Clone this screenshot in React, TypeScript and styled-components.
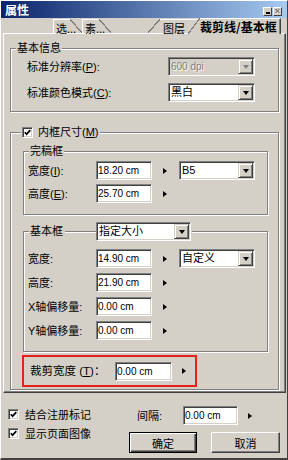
import React from 'react';
import styled, { createGlobalStyle, css } from 'styled-components';

const FACE = '#d4d0c8';
const SHADOW = '#808080';
const DARK = '#404040';
const LIGHT = '#ffffff';
const SL = 12;

const GlobalStyle = createGlobalStyle`
  html, body { margin: 0; padding: 0; background: ${FACE}; }
  body {
    font-family: "Liberation Sans", "Noto Sans CJK SC", sans-serif;
    font-size: 11px;
    color: #000;
  }
  * { box-sizing: border-box; }
`;

const Window = styled.div`
  width: 288px;
  height: 460px;
  background: ${FACE};
  border-style: solid;
  border-width: 1px 1px 2px 1px;
  border-color: ${LIGHT} ${DARK} ${DARK} ${LIGHT};
  display: flex;
  flex-direction: column;
  overflow: hidden;
`;

const TitleBar = styled.div`
  flex: none;
  height: 17px;
  background: linear-gradient(to right, #0a246a, #a6caf0);
  display: flex;
  align-items: center;
  padding: 0 5px 0 4px;
`;

const Title = styled.span`
  flex: 1;
  color: #fff;
  font-family: "Noto Sans CJK SC", sans-serif;
  font-weight: bold;
  font-size: 12px;
  line-height: 14px;
`;

const CaptionButtons = styled.div`
  display: flex;
  gap: 1px;
  margin-top: 3px;
`;

const CaptionButton = styled.div`
  width: 9px;
  height: 9px;
  background: ${FACE};
  border: 1px solid;
  border-color: ${LIGHT} ${DARK} ${DARK} ${LIGHT};
  display: flex;
  align-items: flex-end;
  justify-content: center;
  padding-bottom: 1px;
`;

const MinBar = styled.span`
  width: 4px;
  height: 2px;
  background: #000;
`;

const TabStrip = styled.div`
  flex: none;
  height: 15px;
  margin: 0 1px 0 2px;
  padding: 0 5px 0 50px;
  display: flex;
  align-items: flex-end;
  position: relative;
  z-index: 1;
`;

type Edge = 'v' | 's' | 'n';

const slantLeft = (inside: string, bottom: number) => css`
  &::before {
    content: '';
    position: absolute;
    left: -${SL}px;
    top: -1px;
    bottom: ${bottom}px;
    width: ${SL}px;
    background: linear-gradient(
      to top left,
      ${inside} calc(50% - 0.6px),
      ${SHADOW} calc(50% - 0.6px),
      ${SHADOW} calc(50% + 0.6px),
      transparent calc(50% + 0.6px)
    );
  }
`;

const slantRight = css`
  &::after {
    content: '';
    position: absolute;
    right: -${SL}px;
    top: -1px;
    bottom: 0;
    width: ${SL}px;
    background: linear-gradient(
      to top right,
      transparent calc(50% - 0.6px),
      ${SHADOW} calc(50% - 0.6px),
      ${SHADOW} calc(50% + 0.6px),
      transparent calc(50% + 0.6px)
    );
  }
`;

const Tab = styled.div<{ $left: Edge; $right: Edge; $w: number; $active?: boolean; $tuck?: boolean }>`
  position: relative;
  flex: none;
  width: ${p => p.$w}px;
  height: ${p => (p.$active ? 16 : 14)}px;
  margin-bottom: ${p => (p.$active ? -1 : 0)}px;
  margin-left: ${p => (p.$left === 's' ? SL : 0)}px;
  margin-right: ${p => (p.$right === 's' ? SL : p.$tuck ? -SL : 0)}px;
  z-index: ${p => (p.$active ? 2 : 1)};
  background: ${p => (p.$active ? FACE : 'transparent')};
  border-top: 1px solid ${LIGHT};
  border-left: ${p => (p.$left === 'v' ? `1px solid ${LIGHT}` : '0')};
  border-right: ${p => (p.$right === 'v' ? `1px solid ${DARK}` : '0')};
  box-shadow: ${p => (p.$right === 'v' ? `inset -1px 0 0 ${SHADOW}` : 'none')};
  padding-left: ${p => (p.$left === 'v' ? 2 : 3)}px;
  padding-top: 1px;
  white-space: nowrap;
  ${p => p.$left === 's' && slantLeft(p.$active ? FACE : 'transparent', 0)}
  ${p => p.$right === 's' && slantRight}
`;

const TabLabel = styled.span<{ $active?: boolean }>`
  position: relative;
  z-index: 1;
  display: block;
  margin-left: ${p => (p.$active ? -3 : 0)}px;
  font-family: "Noto Sans CJK SC", sans-serif;
  font-size: ${p => (p.$active ? 12 : 11)}px;
  font-weight: ${p => (p.$active ? 'bold' : 'normal')};
  line-height: 14px;
`;

const TabGap = styled.div`
  flex: 1;
`;

const Panel = styled.div`
  flex: none;
  margin: 0 1px 0 2px;
  border: 1px solid;
  border-color: ${LIGHT} ${DARK} ${DARK} ${LIGHT};
  box-shadow: inset -1px -1px 0 ${SHADOW};
  padding: 7px 6px 2px 6px;
`;

const Group = styled.fieldset<{ $pad: string; $mt?: number }>`
  margin: ${p => p.$mt ?? 0}px 0 0 0;
  padding: ${p => p.$pad};
  min-width: 0;
  border: 1px solid ${SHADOW};
  box-shadow: 1px 1px 0 ${LIGHT}, inset 1px 1px 0 ${LIGHT};
`;

const Legend = styled.legend<{ $ml: number }>`
  margin-left: ${p => p.$ml}px;
  padding: 0 1px;
  background: ${FACE};
`;

const LegendRow = styled.span`
  display: flex;
  align-items: center;
  line-height: 15px;
  white-space: nowrap;
`;

const LegendLine = styled.span<{ $w: number }>`
  width: ${p => p.$w}px;
  height: 19px;
  background: linear-gradient(
    to bottom,
    transparent 9px,
    ${SHADOW} 9px,
    ${SHADOW} 10px,
    ${LIGHT} 10px,
    ${LIGHT} 11px,
    transparent 11px
  );
`;

const Rows = styled.div<{ $cols: string; $gap: number }>`
  display: grid;
  grid-template-columns: ${p => p.$cols};
  row-gap: ${p => p.$gap}px;
  align-items: center;
`;

const Label = styled.span`
  line-height: 14px;
  white-space: nowrap;
`;

const Field = styled.input<{ $w: number }>`
  width: ${p => p.$w}px;
  height: 19px;
  margin: 0;
  padding: 0 0 0 1px;
  background: #fff;
  border: 1px solid;
  border-color: ${SHADOW} ${LIGHT} ${LIGHT} ${SHADOW};
  box-shadow: inset 1px 1px 0 ${DARK}, inset -1px -1px 0 ${FACE};
  font-family: "Liberation Sans", sans-serif;
  font-size: 10px;
  color: #000;
  outline: none;
`;

const Select = styled.div<{ $w: number; $disabled?: boolean }>`
  width: ${p => p.$w}px;
  height: 19px;
  display: flex;
  align-items: center;
  background: ${p => (p.$disabled ? FACE : '#fff')};
  border: 1px solid;
  border-color: ${SHADOW} ${LIGHT} ${LIGHT} ${SHADOW};
  box-shadow: inset 1px 1px 0 ${DARK}, inset -1px -1px 0 ${FACE};
  padding: 1px 1px 1px 2px;
`;

const SelectText = styled.span<{ $disabled?: boolean }>`
  flex: 1;
  font-size: ${p => (p.$disabled ? 10 : 11)}px;
  line-height: 15px;
  color: ${p => (p.$disabled ? SHADOW : '#000')};
  text-shadow: ${p => (p.$disabled ? `1px 1px 0 ${LIGHT}` : 'none')};
  white-space: nowrap;
  overflow: hidden;
`;

const DropButton = styled.span<{ $disabled?: boolean }>`
  flex: none;
  width: 15px;
  height: 15px;
  background: ${FACE};
  border: 1px solid;
  border-color: ${FACE} ${DARK} ${DARK} ${FACE};
  box-shadow: inset 1px 1px 0 ${LIGHT}, inset -1px -1px 0 ${SHADOW};
  display: flex;
  align-items: center;
  justify-content: center;
  &::before {
    content: '';
    width: 0;
    height: 0;
    border-top: 4px solid ${p => (p.$disabled ? SHADOW : '#000')};
    border-left: 3.5px solid transparent;
    border-right: 3.5px solid transparent;
    margin-top: 1px;
  }
`;

const Arrow = styled.span<{ $ml?: number }>`
  justify-self: start;
  width: 0;
  height: 0;
  margin-left: ${p => p.$ml ?? 11}px;
  border-left: 4px solid #000;
  border-top: 3.5px solid transparent;
  border-bottom: 3.5px solid transparent;
`;

const CheckBox = styled.span`
  flex: none;
  width: 11px;
  height: 11px;
  background: #fff;
  border: 1px solid;
  border-color: ${SHADOW} ${LIGHT} ${LIGHT} ${SHADOW};
  box-shadow: inset 1px 1px 0 ${DARK}, inset -1px -1px 0 ${FACE};
  display: flex;
  align-items: center;
  justify-content: center;
`;

const CropBox = styled.div`
  margin: 3px 0 0 -1px;
  width: 175px;
  height: 32px;
  border: 2px solid #e8201c;
  display: flex;
  align-items: center;
  padding-left: 6px;
`;

const CropLabel = styled(Label)`
  width: 85px;
  font-size: 11.5px;
`;

const Footer = styled.div`
  flex: none;
  display: flex;
  align-items: flex-start;
  padding: 12px 0 0 7px;
`;

const CheckList = styled.div`
  width: 121px;
  display: flex;
  flex-direction: column;
`;

const CheckRow = styled.label`
  height: 19px;
  display: flex;
  align-items: center;
  gap: 6px;
  line-height: 14px;
  white-space: nowrap;
`;

const FooterRight = styled.div`
  padding-top: 1px;
  display: flex;
  flex-direction: column;
  gap: 7px;
`;

const SpacingRow = styled.div`
  height: 19px;
  display: flex;
  align-items: center;
`;

const SpacingLabel = styled(Label)`
  width: 46px;
  margin-left: 8px;
`;

const ButtonRow = styled.div`
  display: flex;
  gap: 14px;
`;

const Button = styled.button<{ $w: number; $default?: boolean }>`
  width: ${p => p.$w}px;
  height: 21px;
  margin: 0;
  padding: 0;
  background: ${FACE};
  font-family: "Liberation Sans", "Noto Sans CJK SC", sans-serif;
  font-size: 11px;
  color: #000;
  ${p =>
    p.$default
      ? css`
          border: 1px solid #000;
          box-shadow: inset 1px 1px 0 ${LIGHT}, inset -1px -1px 0 ${DARK}, inset -2px -2px 0 ${SHADOW};
        `
      : css`
          border: 1px solid;
          border-color: ${LIGHT} ${DARK} ${DARK} ${LIGHT};
          box-shadow: inset -1px -1px 0 ${SHADOW};
        `}
`;

const Check = () => (
  <svg width="7" height="7" viewBox="0 0 7 7">
    <polyline points="0.8,3.2 2.6,5.2 6.3,1.2" fill="none" stroke="#000" strokeWidth="1.7" />
  </svg>
);

const CloseGlyph = () => (
  <svg width="7" height="6" viewBox="0 0 7 6" style={{ marginBottom: 0 }}>
    <path d="M1.5 1 L5.5 5 M5.5 1 L1.5 5" stroke={LIGHT} strokeWidth="1.2" transform="translate(0.6 0.6)" />
    <path d="M1.5 1 L5.5 5 M5.5 1 L1.5 5" stroke={SHADOW} strokeWidth="1.2" />
  </svg>
);

const WIDE = '68px 56px 27px 76px';

export default function App() {
  return (
    <>
      <GlobalStyle />
      <Window>
        <TitleBar>
          <Title>属性</Title>
          <CaptionButtons>
            <CaptionButton>
              <MinBar />
            </CaptionButton>
            <CaptionButton>
              <CloseGlyph />
            </CaptionButton>
          </CaptionButtons>
        </TitleBar>

        <TabStrip>
          <Tab $left="v" $right="s" $w={17}>
            <TabLabel>选...</TabLabel>
          </Tab>
          <Tab $left="v" $right="s" $w={17}>
            <TabLabel>素...</TabLabel>
          </Tab>
          <TabGap />
          <Tab $left="s" $right="n" $w={40} $tuck>
            <TabLabel>图层</TabLabel>
          </Tab>
          <Tab $left="s" $right="v" $w={81} $active>
            <TabLabel $active>裁剪线/基本框</TabLabel>
          </Tab>
        </TabStrip>

        <Panel>
          <Group $pad="1px 0 9px 16px">
            <Legend $ml={-11}>
              <LegendRow>基本信息</LegendRow>
            </Legend>
            <Rows $cols="141px 87px" $gap={7}>
              <Label>
                标准分辨率(<u>P</u>):
              </Label>
              <Select $w={87} $disabled>
                <SelectText $disabled>600 dpi</SelectText>
                <DropButton $disabled />
              </Select>
              <Label>
                标准颜色模式(<u>C</u>):
              </Label>
              <Select $w={87}>
                <SelectText>黑白</SelectText>
                <DropButton />
              </Select>
            </Rows>
          </Group>

          <Group $pad="4px 10px 2px 12px" $mt={13}>
            <Legend $ml={-2}>
              <LegendRow>
                <CheckBox>
                  <Check />
                </CheckBox>
                <span style={{ marginLeft: 5 }}>
                  内框尺寸(<u>M</u>)
                </span>
              </LegendRow>
            </Legend>

            <Group $pad="2px 0 11px 4px">
              <Legend $ml={1}>
                <LegendRow>完稿框</LegendRow>
              </Legend>
              <Rows $cols={WIDE} $gap={4}>
                <Label>
                  宽度(<u>I</u>):
                </Label>
                <Field $w={56} readOnly value="18.20 cm" />
                <Arrow />
                <Select $w={76}>
                  <SelectText>B5</SelectText>
                  <DropButton />
                </Select>
                <Label>
                  高度(<u>E</u>):
                </Label>
                <Field $w={56} readOnly value="25.70 cm" />
                <Arrow />
                <span />
              </Rows>
            </Group>

            <Group $pad="8px 0 11px 4px" $mt={7}>
              <Legend $ml={1}>
                <LegendRow>
                  <span style={{ paddingRight: 2 }}>基本框</span>
                  <LegendLine $w={31} />
                  <Select $w={95}>
                    <SelectText>指定大小</SelectText>
                    <DropButton />
                  </Select>
                </LegendRow>
              </Legend>
              <Rows $cols={WIDE} $gap={5}>
                <Label>宽度:</Label>
                <Field $w={56} readOnly value="14.90 cm" />
                <Arrow />
                <Select $w={76}>
                  <SelectText>自定义</SelectText>
                  <DropButton />
                </Select>
                <Label>高度:</Label>
                <Field $w={56} readOnly value="21.90 cm" />
                <Arrow />
                <span />
                <Label>X轴偏移量:</Label>
                <Field $w={56} readOnly value="0.00 cm" />
                <Arrow />
                <span />
                <Label>Y轴偏移量:</Label>
                <Field $w={56} readOnly value="0.00 cm" />
                <Arrow />
                <span />
              </Rows>
            </Group>

            <CropBox>
              <CropLabel>
                裁剪宽度 (<u>T</u>)：
              </CropLabel>
              <Field $w={57} readOnly value="0.00 cm" />
              <Arrow $ml={10} />
            </CropBox>
          </Group>
        </Panel>

        <Footer>
          <CheckList>
            <CheckRow>
              <CheckBox>
                <Check />
              </CheckBox>
              结合注册标记
            </CheckRow>
            <CheckRow>
              <CheckBox>
                <Check />
              </CheckBox>
              显示页面图像
            </CheckRow>
          </CheckList>
          <FooterRight>
            <SpacingRow>
              <SpacingLabel>间隔:</SpacingLabel>
              <Field $w={55} readOnly value="0.00 cm" />
              <Arrow $ml={10} />
            </SpacingRow>
            <ButtonRow>
              <Button $w={68} $default>
                确定
              </Button>
              <Button $w={69}>取消</Button>
            </ButtonRow>
          </FooterRight>
        </Footer>
      </Window>
    </>
  );
}
